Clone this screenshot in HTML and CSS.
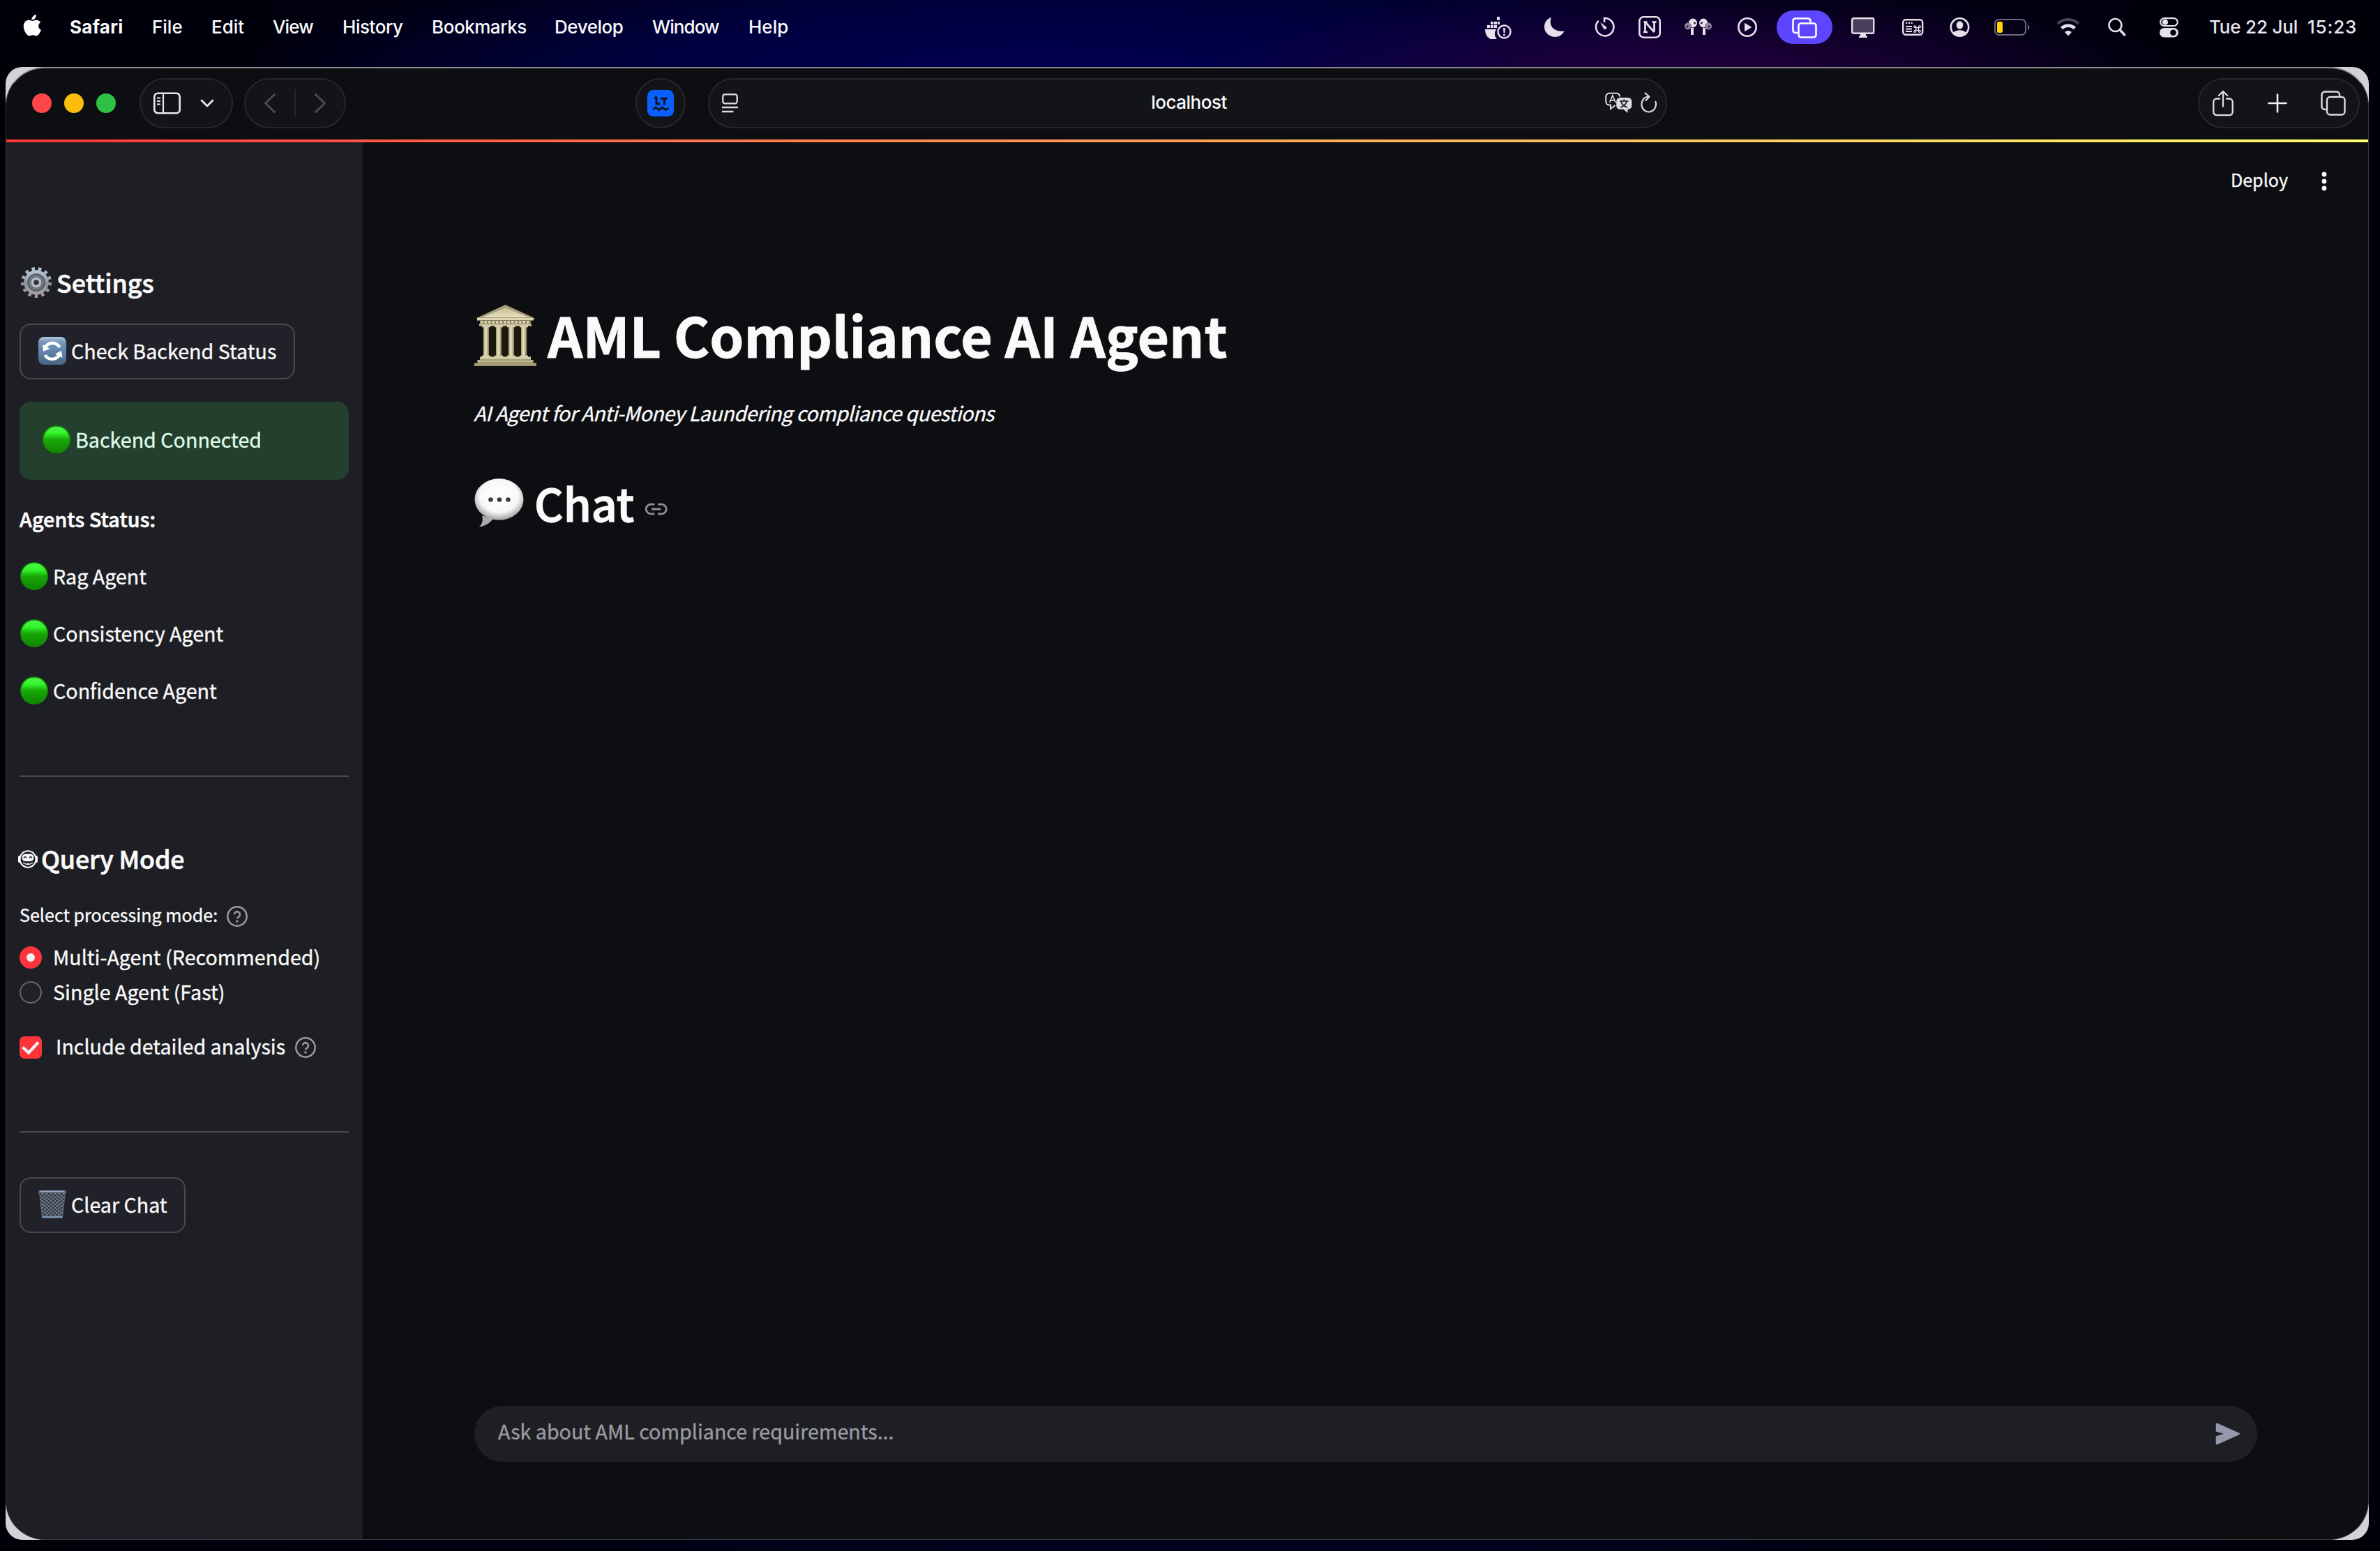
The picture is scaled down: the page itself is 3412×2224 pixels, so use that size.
FILE: index.html
```html
<!DOCTYPE html>
<html lang="en">
<head>
<meta charset="utf-8">
<title>AML Compliance AI Agent</title>
<link rel="stylesheet" href="styles.css">
</head>
<body>
<svg class="defs" width="0" height="0" aria-hidden="true">
  <defs>
    <linearGradient id="gBall" x1="0" y1="0" x2="0" y2="1"><stop offset="0" stop-color="#4bf54b"/><stop offset=".25" stop-color="#35f52b"/><stop offset=".5" stop-color="#18a808"/><stop offset="1" stop-color="#108500"/></linearGradient>
    <linearGradient id="gStone" x1="0" y1="0" x2="0" y2="1"><stop offset="0" stop-color="#c9c09b"/><stop offset="1" stop-color="#e6dfbd"/></linearGradient>
    <linearGradient id="gCol" x1="0" y1="0" x2="1" y2="0"><stop offset="0" stop-color="#a39b74"/><stop offset=".45" stop-color="#ece5c4"/><stop offset="1" stop-color="#8a8260"/></linearGradient>
    <linearGradient id="gBase" x1="0" y1="0" x2="0" y2="1"><stop offset="0" stop-color="#dbd4b0"/><stop offset="1" stop-color="#9a926c"/></linearGradient>
    <linearGradient id="gGear" x1="0" y1="0" x2="0" y2="1"><stop offset="0" stop-color="#b3c4d1"/><stop offset=".55" stop-color="#8b939c"/><stop offset="1" stop-color="#a39ba3"/></linearGradient>
    <linearGradient id="gSync" x1="0" y1="0" x2="0" y2="1"><stop offset="0" stop-color="#b4c9dd"/><stop offset=".18" stop-color="#7597bb"/><stop offset=".55" stop-color="#5f83a8"/><stop offset="1" stop-color="#486480"/></linearGradient>
    <radialGradient id="gBubble" cx=".5" cy=".42" r=".56"><stop offset="0" stop-color="#fff"/><stop offset=".7" stop-color="#f8f8f8"/><stop offset="1" stop-color="#a9a9a9"/></radialGradient>
    <pattern id="mesh" width="6" height="5" patternUnits="userSpaceOnUse"><path d="M0 0l6 5M6 0L0 5" stroke="#6f7d8b" stroke-width="1.2"/></pattern>
    <symbol id="ball" viewBox="0 0 40 40"><circle cx="20" cy="20" r="20" fill="#138c06"/><circle cx="20" cy="20.3" r="18.6" fill="url(#gBall)"/></symbol>
    <symbol id="help" viewBox="0 0 30 30"><circle cx="15" cy="15" r="13.7" fill="none" stroke="#9b9b9f" stroke-width="2.5"/><path d="M11 12.2a4 4 0 1 1 6.6 3c-1.500 1.200-2.600 1.800-2.600 3.400" fill="none" stroke="#9b9b9f" stroke-width="2.500"/><circle cx="15" cy="22" r="1.700" fill="#9b9b9f"/></symbol>
  </defs>
</svg>

<header class="menubar">
  <nav class="menus">
    <svg class="apple" width="27" height="32" viewBox="0 0 27 32" fill="#fff"><path d="M18.900 0c.3 2.200-.7 4.200-1.900 5.600-1.200 1.400-2.900 2.300-4.600 2.200-.3-2 .7-4.100 1.800-5.400C15.400 1 17.300.1 18.900 0zM25.300 11c-2 1.200-3.200 3-3.200 5.300 0 2.700 1.600 4.800 3.900 5.700-.5 1.600-1.300 3.100-2.300 4.600-1.300 1.900-2.600 3.900-4.700 3.900-2 0-2.600-1.200-5-1.200-2.300 0-3.100 1.200-5 1.300-2 .1-3.600-2.100-4.900-4C1.400 22.700-.7 15.700 2.100 11.400c1.300-2.200 3.700-3.600 6.200-3.600 2 0 3.800 1.300 5 1.300 1.200 0 3.500-1.600 5.900-1.400 1 0 4 .4 6.100 3.300z"/></svg>
    <b>Safari</b><span class="wide">File</span><span class="wide">Edit</span><span class="tight">View</span><span>History</span><span>Bookmarks</span><span>Develop</span><span class="tight">Window</span><span class="wide">Help</span>
  </nav>
  <div class="status">
    <svg width="40" height="34" viewBox="0 0 40 34" fill="#e4e1ea"><path d="M0 20h16a11 11 0 0 0 2 15c-10 2-18-4-18-15zM3 14h4v4H3zM8 14h4v4H8zM13 14h4v4h-4zM8 9h4v4H8zM13 9h4v4h-4zM18 9h3v4h-3zM17 2h4v5h-4z"/><circle cx="27.500" cy="23.500" r="9" fill="none" stroke="#e4e1ea" stroke-width="2.400"/><path d="M26 18h3l-.5 7h-2z"/><circle cx="27.500" cy="28" r="1.600"/></svg>
    <svg width="30" height="34" viewBox="0 0 30 34" fill="#e4e1ea"><path d="M10 3C6 12 11 24.500 28.500 22.500 26 28 21 31 15.500 31 7 31 0 24.600 0 16.500 0 10 4 4.800 10 3z"/></svg>
    <svg width="30" height="34" viewBox="0 0 30 34"><path d="M5 8.500a12.700 12.700 0 1 0 9-4.500v5" fill="none" stroke="#e4e1ea" stroke-width="2.600" stroke-linecap="round"/><path d="M8 10l8.500 6.200a2.200 2.200 0 0 1-3.200 3.200z" fill="#e4e1ea"/></svg>
    <svg width="34" height="34" viewBox="0 0 34 34"><rect x="1.300" y="2.300" width="29.400" height="29.400" rx="6" fill="none" stroke="#e4e1ea" stroke-width="2.600"/><path d="M9.500 10.200v13.600M22.500 23.500v-13M10 10l12.500 14M7.500 9.700h5M19.500 9.700h6M7 24h6" fill="none" stroke="#e4e1ea" stroke-width="2.700"/></svg>
    <svg width="40" height="34" viewBox="0 0 40 34"><g fill="#e4e1ea"><ellipse cx="12" cy="11" rx="6" ry="6.500"/><ellipse cx="27" cy="11" rx="6" ry="6.500"/><path d="M9 18h4v10H9zM26 18h4v10h-4z"/></g><g fill="#8f7f9f"><circle cx="5" cy="15.500" r="5"/><circle cx="34" cy="15.500" r="5"/></g><path d="M13.500 10l2 2M25.500 10l-2 2M3 15l2 2M36 15l-2 2" stroke="#12001f" stroke-width="2"/></svg>
    <svg width="30" height="34" viewBox="0 0 30 34"><circle cx="14" cy="17" r="12.700" fill="none" stroke="#e4e1ea" stroke-width="2.600"/><path d="M10.500 11.500v11l9-5.500z" fill="#e4e1ea" stroke="#e4e1ea" stroke-linejoin="round"/></svg>
    <span class="active"><svg width="36" height="30" viewBox="0 0 36 30" fill="none" stroke="#fff" stroke-width="2.600"><path d="M8 22H5a3.500 3.500 0 0 1-3.500-3.500V5A3.500 3.500 0 0 1 5 1.500h18A3.500 3.500 0 0 1 26.500 5v2"/><rect x="9.500" y="8.500" width="25" height="20" rx="3.500"/></svg></span>
    <svg width="34" height="34" viewBox="0 0 34 34"><rect x="1.200" y="4.200" width="31" height="21.500" rx="2" fill="#4a3e5d" stroke="#e4e1ea" stroke-width="2.400"/><path d="M13 26h8v3.500h2V32H11v-2.500h2z" fill="#e4e1ea"/></svg>
    <svg width="32" height="34" viewBox="0 0 32 34"><rect x="1.200" y="6.200" width="28" height="21.500" rx="4" fill="none" stroke="#e4e1ea" stroke-width="2.400"/><path d="M5 11h2.200M8.800 11H11M12.600 11h2.200M5 16h9M5 19.500h9M5 23h9" stroke="#e4e1ea" stroke-width="2"/><path d="M19.700 17.700h3.800v3.800h-3.800zM19.700 17.700v-1.500a1.400 1.400 0 1 0-1.400 1.500zM23.500 17.700v-1.500a1.400 1.400 0 1 1 1.400 1.500zM19.700 21.500v1.500a1.400 1.400 0 1 1-1.400-1.500zM23.500 21.500v1.500a1.400 1.400 0 1 0 1.400-1.500z" fill="none" stroke="#e4e1ea" stroke-width="1.300"/></svg>
    <svg width="30" height="34" viewBox="0 0 30 34"><circle cx="14.500" cy="17" r="12.700" fill="none" stroke="#e4e1ea" stroke-width="2.600"/><ellipse cx="14.500" cy="14" rx="4.800" ry="5.800" fill="#e4e1ea"/><path d="M5.500 25c3-5 15-5 18 0-4 6-14 6-18 0z" fill="#e4e1ea"/></svg>
    <svg width="54" height="34" viewBox="0 0 54 34"><rect x="1" y="6" width="44" height="22" rx="6" fill="none" stroke="#6b6b7c" stroke-width="2"/><path d="M48 13c3 1 3 7 0 8z" fill="#6b6b7c"/><rect x="4" y="9" width="8" height="16" rx="2.500" fill="#ffd60a"/></svg>
    <svg width="36" height="34" viewBox="0 0 36 34" fill="none" stroke-width="4"><path d="M2 12a22 22 0 0 1 30 0" stroke="#474557"/><path d="M7.500 18.500a14 14 0 0 1 19 0" stroke="#e4e1ea" stroke-width="4.500"/><path d="M17 29.500l-5-5.500a7.500 7.500 0 0 1 10 0z" fill="#e4e1ea"/></svg>
    <svg width="28" height="34" viewBox="0 0 28 34" fill="none" stroke="#e4e1ea" stroke-linecap="round"><circle cx="10.500" cy="14" r="9" stroke-width="2.600"/><path d="M17.300 21l6.500 7" stroke-width="3.400"/></svg>
    <svg width="30" height="34" viewBox="0 0 30 34"><rect x="1.200" y="4.200" width="24.600" height="11" rx="5.500" fill="none" stroke="#e4e1ea" stroke-width="2.200"/><circle cx="8" cy="9.700" r="4" fill="#e4e1ea"/><rect y="18" width="27" height="13.500" rx="6.700" fill="#e4e1ea"/><circle cx="19.500" cy="24.700" r="4.300" fill="#000012"/></svg>
    <time>Tue 22 Jul</time><time class="clock">15:23</time>
  </div>
</header>

<div class="frame">
<div class="window">
  <div class="toolbar">
    <div class="lights"><i class="red"></i><i class="yellow"></i><i class="green"></i></div>
    <div class="pill sidebar-pill">
      <svg width="40" height="32" viewBox="0 0 40 32" fill="none" stroke="#e8e8ea"><rect x="1.300" y="1.800" width="36.400" height="28.400" rx="5" stroke-width="2.600"/><path d="M14 2v28" stroke-width="2.200"/><path d="M5 8.500h5M5 13h5M5 17.500h5" stroke-width="1.800"/></svg>
      <svg width="20" height="14" viewBox="0 0 20 14" fill="none" stroke="#e8e8ea" stroke-width="2.800" stroke-linecap="round" stroke-linejoin="round"><path d="M2 3l8 8 8-8"/></svg>
    </div>
    <div class="pill history-pill">
      <svg width="18" height="30" viewBox="0 0 18 30"><path d="M15.500 2.500L2.500 15l13 12.500"/></svg>
      <span class="divider"></span>
      <svg width="18" height="30" viewBox="0 0 18 30"><path d="M2.500 2.500L15.500 15l-13 12.500"/></svg>
    </div>
    <div class="pill ext-pill">
      <svg width="38" height="38" viewBox="0 0 38 38"><rect width="38" height="38" rx="8.500" fill="#0a60ff"/><path d="M10 11h3v9h5.500M18.500 12.300H29M24.500 12v9.500" fill="none" stroke="#14151a" stroke-width="3"/><path d="M8 28l4-3 5 3.600 4.500-3.600 5 3.600 4-3" fill="none" stroke="#14151a" stroke-width="2.800"/></svg>
    </div>
    <div class="pill address">
      <svg width="24" height="30" viewBox="0 0 24 30"><rect x="1.300" y="2.300" width="20.400" height="13" rx="3" fill="none" stroke="#dcdcde" stroke-width="2.300"/><path d="M0 21h23M0 27h16.500" stroke="#dcdcde" stroke-width="2.300"/></svg>
      <span class="url">localhost</span>
      <svg width="76" height="32" viewBox="0 0 76 32"><path d="M14.500 19l-6.500 5v-5.500H6A4.700 4.700 0 0 1 1.300 14V6.500A4.700 4.700 0 0 1 6 1.800h10.500a4.700 4.700 0 0 1 4.700 4.700" fill="none" stroke="#dcdcde" stroke-width="2"/><path d="M6.500 15l4.300-10 4.300 10M8 11.800h5.700" fill="none" stroke="#dcdcde" stroke-width="1.700"/><path d="M21.500 8H33a5.300 5.300 0 0 1 5.300 5.300v6.200a5.300 5.300 0 0 1-5.300 5.300h-.5V30l-6-5.200h-5a5.300 5.300 0 0 1-5.300-5.300v-6.200A5.300 5.300 0 0 1 21.500 8z" fill="#dcdcde"/><path d="M21 13h12.500M27.200 10.500V13M31 13.500c-1 4-4 7-9 8.500M23 13.500c1 4 4 7 9 8.500" fill="none" stroke="#15161a" stroke-width="1.700"/><path d="M72.500 14a10.300 11 0 1 1-10.300-7.500M57.500 1.500l6 5-5 5.500" fill="none" stroke="#dcdcde" stroke-width="2.200" stroke-linecap="round" stroke-linejoin="round"/></svg>
    </div>
    <div class="pill actions">
      <svg width="30" height="38" viewBox="0 0 30 38" fill="none" stroke="#dedee0" stroke-width="2.300" stroke-linecap="round"><path d="M10 12.500H6A4.700 4.700 0 0 0 1.300 17v14.500A4.700 4.700 0 0 0 6 36.200h18a4.700 4.700 0 0 0 4.700-4.700V17a4.700 4.700 0 0 0-4.700-4.500h-4M15 23.500V2.500M8.800 8L15 2l6.200 6"/></svg>
      <svg width="28" height="28" viewBox="0 0 28 28" stroke="#f2f2f4" stroke-width="2.600" stroke-linecap="round"><path d="M14 1.500v25M1.500 14h25"/></svg>
      <svg width="36" height="36" viewBox="0 0 36 36" fill="none" stroke="#dedee0" stroke-width="2.400"><path d="M8 27H6a4.500 4.500 0 0 1-4.500-4.500V6A4.500 4.500 0 0 1 6 1.500h16.500A4.500 4.500 0 0 1 27 6v2.500"/><rect x="9" y="9" width="25.500" height="25.500" rx="4.500"/></svg>
    </div>
  </div>
  <div class="rainbow"></div>
  <div class="app">
    <aside class="sidebar">
      <h2><svg class="gear" width="44" height="44" viewBox="0 0 44 44"><g fill="none" stroke="url(#gGear)"><circle cx="22" cy="22" r="19.600" stroke-width="5" stroke-dasharray="4.400 5.073"/><circle cx="22" cy="22" r="14.800" stroke-width="6"/></g><circle cx="22" cy="22" r="12" fill="#6e7680"/><circle cx="22" cy="22" r="12" fill="none" stroke="#4d535b" stroke-width="1.500"/><circle cx="22" cy="22" r="5.500" fill="#30343a" stroke="#bcc0c6" stroke-width="3.500"/></svg><span>Settings</span></h2>
      <button class="btn check"><svg width="40" height="40" viewBox="0 0 40 40"><rect width="40" height="40" rx="8" fill="url(#gSync)"/><path d="M9 17.500A11.700 11.700 0 0 1 30.500 15M31 23A11.700 11.700 0 0 1 9.500 26" fill="none" stroke="#fff" stroke-width="4.400"/><path d="M6 11l1 10 9.500-4zM34.500 30L33 20l-9 4.500z" fill="#fff"/></svg><span>Check Backend Status</span></button>
      <div class="alert"><svg width="40" height="40"><use href="#ball"/></svg><span>Backend Connected</span></div>
      <p class="agents-title">Agents Status:</p>
      <ul class="agents">
        <li><svg width="40" height="40"><use href="#ball"/></svg><span>Rag Agent</span></li>
        <li><svg width="40" height="40"><use href="#ball"/></svg><span>Consistency Agent</span></li>
        <li><svg width="40" height="40"><use href="#ball"/></svg><span>Confidence Agent</span></li>
      </ul>
      <hr class="first">
      <h2 class="query"><svg width="28" height="26" viewBox="0 0 28 26"><path d="M3 8h-1.500q-1.500 0-1.500 2v6q0 2 1.500 2H3zM25 8h1.500q1.500 0 1.500 2v6q0 2-1.500 2H25z" fill="#fafafa"/><ellipse cx="14" cy="13" rx="11.500" ry="11.700" fill="none" stroke="#fafafa" stroke-width="2"/><rect x="5.500" y="5.500" width="17" height="10.500" rx="5" fill="#fafafa"/><path d="M8 11.500q2-4 4 0M16 11.500q2-4 4 0" fill="none" stroke="#1e1f24" stroke-width="1.400"/><path d="M7 18q7 5 14 0" fill="none" stroke="#fafafa" stroke-width="1.200"/><ellipse cx="14" cy="20" rx="2" ry="1.300" fill="#fafafa"/></svg><span>Query Mode</span></h2>
      <div class="label"><span>Select processing mode:</span><svg width="30" height="30"><use href="#help"/></svg></div>
      <label class="option on"><i class="radio checked"></i><span>Multi-Agent (Recommended)</span></label>
      <label class="option"><i class="radio"></i><span>Single Agent (Fast)</span></label>
      <label class="option analysis"><i class="checkbox"><svg width="32" height="32" viewBox="0 0 32 32"><path d="M4.500 15.500l8.500 8L27 8.500" fill="none" stroke="#f0f2f6" stroke-width="4.200"/></svg></i><span>Include detailed analysis</span><svg width="30" height="30"><use href="#help"/></svg></label>
      <hr class="second">
      <button class="btn clear"><svg width="40" height="40" viewBox="0 0 40 40"><path d="M1.500 3h37L34.500 38h-29z" fill="#2b313a"/><path d="M1.500 3h37L34.500 38h-29z" fill="url(#mesh)" stroke="#5f6d7b" stroke-width="1"/><rect x="0" y="0" width="40" height="4" rx="1.500" fill="#6d6a78"/><path d="M3 1.200h34" stroke="#a9bfe0" stroke-width="1.300"/><path d="M5.500 38.300h29" stroke="#7f98b5" stroke-width="2.400"/></svg><span>Clear Chat</span></button>
    </aside>
    <main>
      <div class="deploybar"><span>Deploy</span><svg width="8" height="28" viewBox="0 0 8 28" fill="#fafafa"><circle cx="4" cy="4" r="3.400"/><circle cx="4" cy="14" r="3.400"/><circle cx="4" cy="24" r="3.400"/></svg></div>
      <h1><svg width="89" height="88" viewBox="0 0 89 88"><rect x="12" y="28" width="65" height="48" fill="#1d180c"/><path d="M44.500 0L87 19.500H2z" fill="#a69d77"/><path d="M44.500 4.500L78 18H11z" fill="url(#gStone)"/><rect x="4" y="19" width="81" height="3.500" fill="#ded6b2"/><rect x="8" y="22.500" width="73" height="5" fill="#8f8763"/><path d="M9 25h71" stroke="#d9d1ac" stroke-width="4" stroke-dasharray="3.500 2"/><rect x="7" y="27.500" width="75" height="3" fill="#cfc7a1"/><g fill="url(#gCol)"><rect x="13" y="30" width="8" height="44"/><rect x="31" y="30" width="8" height="44"/><rect x="49" y="30" width="8" height="44"/><rect x="67" y="30" width="8" height="44"/></g><path d="M11 31h12M29 31h12M47 31h12M65 31h12M11 74h12M29 74h12M47 74h12M65 74h12" stroke="#d6ceaa" stroke-width="2.500"/><path d="M8 74.500h73v4.500h3.500v4.500H89V88H0v-4.500h4.500V79H8z" fill="url(#gBase)"/><path d="M8 79h73M4 83.500h81" stroke="#8a8260" stroke-width="1"/></svg><span>AML Compliance AI Agent</span></h1>
      <p class="subtitle">AI Agent for Anti-Money Laundering compliance questions</p>
      <h2 class="chat"><svg width="71" height="70" viewBox="0 0 71 70"><path d="M7 69.500c5-5 5.500-10 4-16l16 4c-4 6-11 11-20 12z" fill="#aaa"/><ellipse cx="35.500" cy="30" rx="35" ry="29.800" fill="url(#gBubble)"/><g fill="#3c3c3c"><circle cx="23.500" cy="30.500" r="3.300"/><circle cx="36" cy="30.500" r="3.300"/><circle cx="48.500" cy="30.500" r="3.300"/></g></svg><span>Chat</span><svg class="link" width="34" height="18" viewBox="0 0 34 18" fill="none" stroke="#8e8f94" stroke-width="2.800"><path d="M14.500 2.200H9a6.800 6.800 0 0 0 0 13.600h5.500M19 2.200h5.500a6.800 6.800 0 0 1 0 13.600H19M10 9h13.500"/></svg></h2>
      <div class="prompt"><span>Ask about AML compliance requirements...</span><svg width="36" height="32" viewBox="0 0 36 32"><path d="M2.200 2.200L33.500 16 2.200 29.800v-9.300L17.500 16 2.200 11.500z" fill="#9498ac" stroke="#9498ac" stroke-width="3" stroke-linejoin="round"/></svg></div>
    </main>
  </div>
</div>
</div>
</body>
</html>
```
FILE: styles.css
```css
* { box-sizing: border-box; }

body {
  margin: 0;
  width: 3412px;
  height: 2224px;
  overflow: hidden;
  display: flex;
  flex-direction: column;
  color: #fafafa;
  font: 400 28.65px "Noto Sans CJK SC", "Open Sans", sans-serif;
  background:
    radial-gradient(ellipse 700px 130px at 2420px 110px, rgba(38, 0, 62, .95), rgba(30, 0, 60, .6) 50%, transparent),
    radial-gradient(ellipse 1150px 190px at 1500px 110px, #000052, #000040 50%, transparent),
    linear-gradient(90deg, #000008, #00001a 40%, #00001c 60%, #000008);
}

.defs { position: absolute; }
svg { display: block; flex: none; }
h1, h2, p, ul { margin: 0; padding: 0; }

/* Menu bar */
.menubar {
  height: 96px;
  display: flex;
  justify-content: space-between;
  font: 500 26px/36px Inter, sans-serif;
  letter-spacing: -.45px;
  white-space: nowrap;
}

.menus {
  display: grid;
  grid-template-columns: 67px 118px 85px 88px 100px 128px 176px 140px 138px 60px;
  padding: 21px 0 0 33px;
  height: 60px;
  align-items: start;
}

.menus b { font-weight: 700; letter-spacing: .3px; }
.menus .wide { letter-spacing: 0; }
.menus .tight { letter-spacing: -.9px; }

.status {
  display: grid;
  grid-template-columns: 85px 72px 63px 66px 76px 56px 107px 73px 68px 64px 89px 74px 74px 71px 141px 104px;
  height: 78px;
  align-items: center;
  color: #e8e6ee;
}

.status time { padding-bottom: 1px; letter-spacing: -.2px; }
.status .clock { letter-spacing: .8px; }

.active {
  width: 80px;
  height: 48px;
  border-radius: 24px;
  background: #5d46ff;
  display: flex;
  align-items: center;
  justify-content: center;
  padding-top: 1px;
}

/* Browser window */
.frame {
  width: 3388px;
  height: 2112px;
  margin-left: 8px;
  border-radius: 24px;
  background: #d2d2d4;
  overflow: hidden;
}

.window {
  height: 100%;
  border: 1px solid #36373b;
  border-top: 2px solid #87888c;
  border-radius: 56px;
  overflow: hidden;
  background: #0d0e12;
  display: flex;
  flex-direction: column;
}

.toolbar {
  height: 102px;
  flex: none;
  display: flex;
  align-items: center;
  padding: 0 12px 2px 37px;
}

.lights { display: flex; gap: 18px; }
.lights i { width: 28px; height: 28px; border-radius: 50%; }
.red { background: #ff454c; }
.yellow { background: #fbbd0c; }
.green { background: #2fc046; }

.pill {
  height: 72px;
  border: 2px solid #26272d;
  border-radius: 36px;
  background: #131418;
  display: flex;
  align-items: center;
}

.sidebar-pill { width: 134px; margin-left: 34px; padding-left: 18px; gap: 27px; }
.history-pill { width: 146px; margin-left: 16px; padding-left: 26px; gap: 26px; }
.history-pill path { fill: none; stroke: #4c4d52; stroke-width: 2.8; stroke-linecap: round; stroke-linejoin: round; }
.divider { width: 2px; height: 40px; background: #25262b; }
.ext-pill { width: 72px; margin-left: 415px; justify-content: center; }
.address { width: 1375px; margin-left: 32px; padding: 0 11px 0 18px; justify-content: space-between; }
.url { font: 500 26px/36px Inter, sans-serif; letter-spacing: -.5px; margin-left: 49px; padding-bottom: 2px; }
.actions { width: 232px; margin-left: auto; padding: 0 18px 0 19px; justify-content: space-between; }

.rainbow {
  height: 4px;
  flex: none;
  background: linear-gradient(90deg, #ff333a, #ff7f4f 34%, #fbc15f 67%, #fffd69);
}

.app { flex: 1; display: flex; min-height: 0; -webkit-text-stroke: .35px currentColor; }

/* Sidebar */
.sidebar {
  width: 511px;
  flex: none;
  background: #1e1f24;
  padding: 176px 20px 0 19px;
  display: flex;
  flex-direction: column;
  align-items: flex-start;
  white-space: nowrap;
}

.sidebar span { line-height: 40px; }

.sidebar h2 {
  height: 48px;
  display: flex;
  align-items: center;
  font-size: 35.8px;
  font-weight: 500;
  -webkit-text-stroke: .7px #fafafa;
  gap: 7px;
}

.gear { margin: 2px 0 0 2px; }
.sidebar .query { margin-top: 92px; gap: 5px; letter-spacing: -.15px; }
.query svg { margin: 4px 0 0 -2px; }

.btn {
  height: 80px;
  border: 2px solid #48494f;
  border-radius: 16px;
  background: #21212a;
  color: inherit;
  font: inherit;
  -webkit-text-stroke: inherit;
  display: flex;
  align-items: center;
  padding: 0 0 2px 25px;
  gap: 7px;
}

.check { width: 395px; margin-top: 36px; }
.clear { width: 238px; margin-top: 64px; }

.alert {
  align-self: stretch;
  height: 112px;
  margin-top: 32px;
  padding: 0 0 4px 33px;
  border-radius: 16px;
  background: #243f2e;
  color: #dffde9;
  display: flex;
  align-items: center;
  gap: 7px;
}

.agents-title { margin-top: 36px; line-height: 40px; font-weight: 500; -webkit-text-stroke: .7px #fafafa; letter-spacing: .1px; }
.agents { list-style: none; margin-top: 42px; display: flex; flex-direction: column; gap: 42px; }
.agents li { display: flex; height: 40px; padding-left: 1px; gap: 7px; align-items: center; }

hr { align-self: stretch; height: 2px; border: 0; background: #4a4b50; margin: 0; }
.first { margin-top: 102px; }
.second { margin-top: 100px; }

.label { height: 40px; margin-top: 40px; display: flex; align-items: center; gap: 13px; font-size: 25.1px; }
.label span { padding-bottom: 6px; }

.option { height: 40px; margin-top: 10px; display: flex; align-items: center; }
.option span { padding: 0 0 3px 16px; }
.option.on { margin-top: 19px; }
.option.analysis { margin-top: 39px; }
.analysis span { padding: 0 14px 4px 20px; }
.radio { width: 32px; height: 32px; border: 2px solid #67686e; border-radius: 50%; background: #21212a; }
.radio.checked { border: 10px solid #ff333b; background: #f0f2f6; }
.checkbox { width: 32px; height: 32px; border-radius: 7px; background: #ff333b; }

/* Main column */
main {
  flex: 1;
  display: flex;
  flex-direction: column;
  padding: 0 159px 111px 160px;
  white-space: nowrap;
}

.deploybar {
  height: 112px;
  display: flex;
  align-items: center;
  justify-content: flex-end;
  gap: 48px;
  margin-right: -100px;
  font-size: 25.1px;
}

.deploybar span { padding-bottom: 6px; line-height: 36px; }

h1 {
  height: 96px;
  margin-top: 117px;
  display: flex;
  align-items: center;
  gap: 16px;
  font-size: 78.8px;
  font-weight: 700;
  letter-spacing: -.13px;
  -webkit-text-stroke: .8px #fafafa;
}

h1 span { line-height: 96px; padding-bottom: 4px; }
.subtitle { margin: 43px 0 0 -1px; line-height: 40px; font-style: italic; letter-spacing: -.44px; }

.chat {
  height: 80px;
  margin-top: 69px;
  display: flex;
  align-items: center;
  gap: 15px;
  font-size: 64.5px;
  font-weight: 500;
  -webkit-text-stroke: 1.3px #fafafa;
}

.chat span { line-height: 80px; padding-bottom: 2px; }
.chat .link { margin-top: 18px; -webkit-text-stroke: 0; }

.prompt {
  height: 80px;
  margin-top: auto;
  border-radius: 40px;
  background: #1e1f24;
  color: #9b9ba0;
  display: flex;
  align-items: center;
  justify-content: space-between;
  padding: 0 24px 0 34px;
}

.prompt span { line-height: 40px; padding-bottom: 9px; }
```
